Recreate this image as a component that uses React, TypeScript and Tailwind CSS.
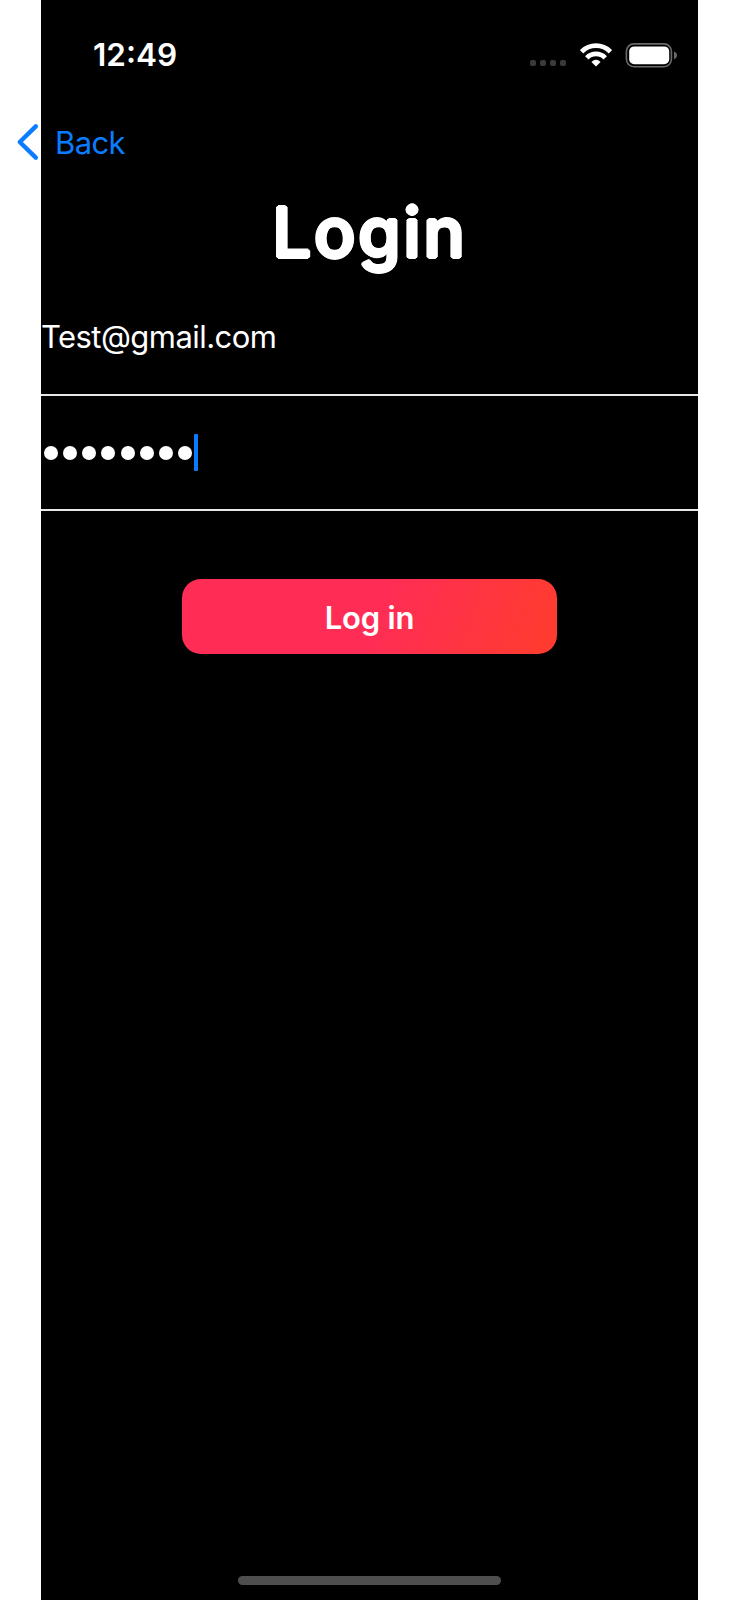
const PASSWORD_LENGTH = 8;

// Spreads copies of the glyphs around a circle, which rounds off their corners.
const roundedOutline = (radius: number) =>
  Array.from({ length: 8 }, (_, i) => {
    const a = (i * Math.PI) / 4;
    return `${(radius * Math.cos(a)).toFixed(2)}px ${(radius * Math.sin(a)).toFixed(2)}px 0.6px #fff`;
  }).join(", ");

function StatusBar() {
  return (
    <div className="flex h-[110px] items-center pr-[21px] pl-[52px]">
      <span className="text-[31.5px] leading-none font-semibold">12:49</span>
      <div className="ml-auto flex items-center">
        <div className="mt-[16px] flex gap-[4px]">
          {[0, 1, 2, 3].map((i) => (
            <span key={i} className="size-[6px] rounded-[2px] bg-[#3a3a3a]" />
          ))}
        </div>
        <svg className="ml-[14px] h-[24px] w-[32px]" viewBox="0 0 32 24" fill="none" stroke="#fff" strokeWidth="4.8">
          <path d="M1.6 8.7A20.2 20.2 0 0 1 30.4 8.7" />
          <path d="M6.8 14.8A12.8 12.8 0 0 1 25.2 14.8" />
          <path d="M16 23.6L11.4 19Q16 14.6 20.6 19Z" fill="#fff" stroke="none" />
        </svg>
        <svg className="ml-[13px] h-[25px] w-[52px]" viewBox="0 0 52 25" fill="none">
          <rect x="1.4" y="0.9" width="45" height="22.8" rx="7.4" stroke="#6a6a6a" strokeWidth="1.6" />
          <rect x="4.2" y="3.4" width="40" height="17.8" rx="5" fill="#fff" />
          <path d="M49 8.4Q52 9.6 52 12.3T49 16.2Z" fill="#6a6a6a" />
        </svg>
      </div>
    </div>
  );
}

export default function App() {
  return (
    <div className="h-[1600px] w-[738px] overflow-hidden bg-white pl-[41px] font-['Inter','Liberation_Sans',sans-serif] text-white">
      <main className="flex h-full w-[657px] flex-col bg-black">
        <StatusBar />

        <button className="-ml-[25px] flex h-[65px] items-center self-start pb-[1px] text-[31px] leading-none font-normal tracking-[-0.6px] text-[#0a7cff]">
          <svg className="h-[38px] w-[24px]" viewBox="0 0 24 38" fill="none" stroke="currentColor" strokeWidth="4.4" strokeLinecap="round" strokeLinejoin="round">
            <path d="M19.8 3.4L3.8 19L19.8 34.6" />
          </svg>
          <span className="ml-[15px]">Back</span>
        </button>

        <h1
          className="flex h-[115px] items-center justify-center pt-[2px] text-[68.5px] leading-none font-medium tracking-[2.8px]"
          style={{ textShadow: roundedOutline(1.9) }}
        >
          <span className="-mr-[1px]">Login</span>
        </h1>

        <div className="flex h-[106px] items-center border-b-2 border-[#e8e8e8] pb-[12px] text-[31px] leading-none tracking-[-0.55px]">
          Test@gmail.com
        </div>

        <div className="flex h-[115px] items-center border-b-2 border-[#e8e8e8] pl-[3px]">
          <div className="flex gap-[5.15px]">
            {Array.from({ length: PASSWORD_LENGTH }, (_, i) => (
              <span key={i} className="size-[14px] rounded-full bg-white" />
            ))}
          </div>
          <span className="ml-[2px] h-[37px] w-[4px] rounded-[1px] bg-[#0a7cff]" />
        </div>

        <button className="mt-[68px] flex h-[75px] w-[375px] items-center justify-center self-center rounded-[19px] bg-[linear-gradient(110deg,#ff2d55_0%,#ff2d55_52%,#ff3b30_96%)] pt-[1px] text-[31px] leading-none font-[560] tracking-[-0.2px]">
          Log in
        </button>

        <div className="mt-auto mb-[15px] h-[9px] w-[263px] self-center rounded-full bg-[#4e4e4e]" />
      </main>
    </div>
  );
}
